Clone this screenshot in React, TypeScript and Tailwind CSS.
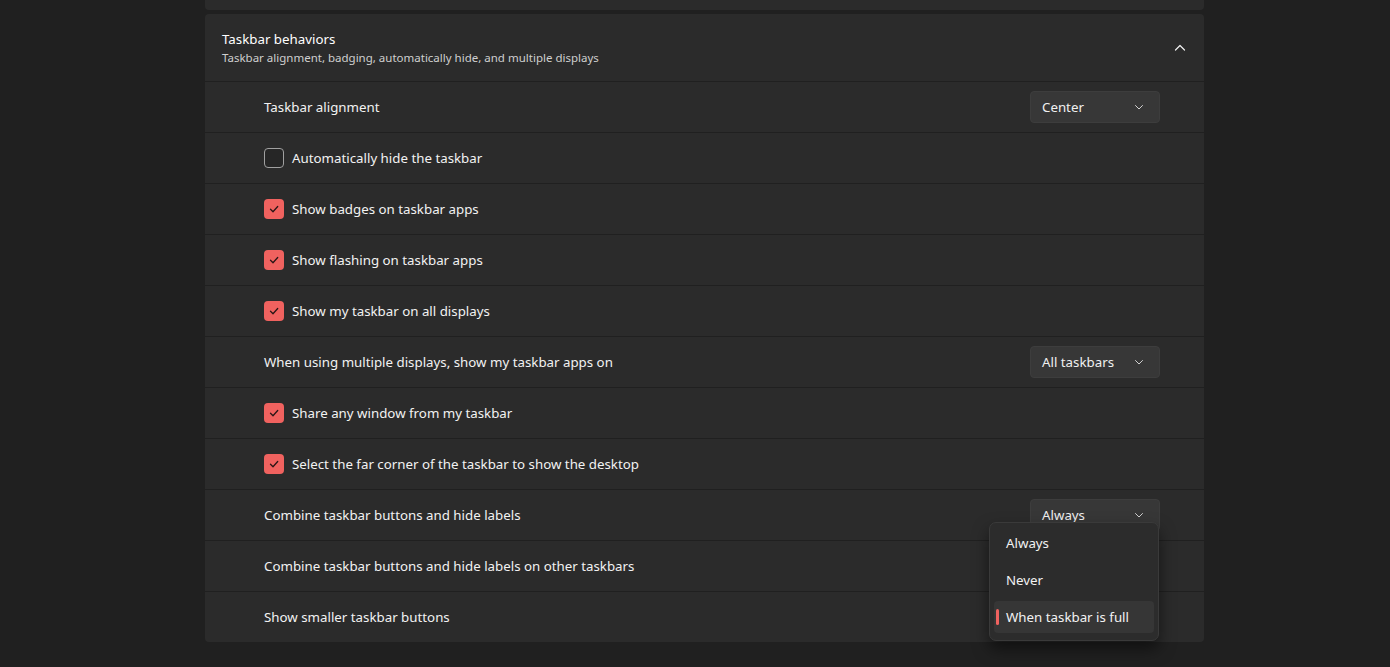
import React from "react";

type Row =
  | { kind: "dropdown"; label: string; value: string }
  | { kind: "check"; label: string; checked: boolean }
  | { kind: "plain"; label: string };

const rows: Row[] = [
  { kind: "dropdown", label: "Taskbar alignment", value: "Center" },
  { kind: "check", label: "Automatically hide the taskbar", checked: false },
  { kind: "check", label: "Show badges on taskbar apps", checked: true },
  { kind: "check", label: "Show flashing on taskbar apps", checked: true },
  { kind: "check", label: "Show my taskbar on all displays", checked: true },
  { kind: "dropdown", label: "When using multiple displays, show my taskbar apps on", value: "All taskbars" },
  { kind: "check", label: "Share any window from my taskbar", checked: true },
  { kind: "check", label: "Select the far corner of the taskbar to show the desktop", checked: true },
  { kind: "dropdown", label: "Combine taskbar buttons and hide labels", value: "Always" },
  { kind: "plain", label: "Combine taskbar buttons and hide labels on other taskbars" },
  { kind: "plain", label: "Show smaller taskbar buttons" },
];

const ChevronDown = () => (
  <svg width="10" height="10" viewBox="0 0 10 10" fill="none">
    <path d="M1.5 3.5 L5 7 L8.5 3.5" stroke="#d0d0d0" strokeWidth="1" strokeLinecap="round" strokeLinejoin="round" />
  </svg>
);

const Dropdown = ({ value }: { value: string }) => (
  <div className="flex items-center justify-between w-[130px] h-[32px] rounded-[4px] bg-[#373737] border border-[#3d3d3d] pl-[11px] pr-[15px] text-[13.3px] text-[#f0f0f0]">
    <span className="pt-[1px]">{value}</span>
    <ChevronDown />
  </div>
);

const Checkbox = ({ checked }: { checked: boolean }) =>
  checked ? (
    <div className="w-[20px] h-[20px] rounded-[4px] bg-[#f0625f] flex items-center justify-center">
      <svg width="12" height="12" viewBox="0 0 12 12" fill="none">
        <path d="M2.5 6.3 L5 8.7 L9.7 3.5" stroke="#2a1616" strokeWidth="1.3" strokeLinecap="round" strokeLinejoin="round" />
      </svg>
    </div>
  ) : (
    <div className="w-[20px] h-[20px] rounded-[4px] border border-[#a0a0a0] bg-[#262626]" />
  );

const App = () => {
  return (
    <div
      className="w-[1390px] h-[667px] bg-[#202020] overflow-hidden text-[#ffffff]"
      style={{ fontFamily: '"Noto Sans", "Open Sans", sans-serif' }}
    >
      <div className="ml-[205px] w-[999px] flex flex-col gap-[1px]">
        <div className="h-[10px] bg-[#2b2b2b] rounded-b-[4px] mb-[3px]" />
        <div className="h-[67px] bg-[#2b2b2b] rounded-t-[4px] flex items-center justify-between pl-[17px] pr-[18px]">
          <div className="flex flex-col pt-[1px]">
            <div className="text-[13.3px] leading-[19px] text-[#ffffff]">Taskbar behaviors</div>
            <div className="text-[11.5px] leading-[17px] text-[#cfcfcf]">
              Taskbar alignment, badging, automatically hide, and multiple displays
            </div>
          </div>
          <svg width="12" height="12" viewBox="0 0 12 12" fill="none">
            <path d="M1.5 8 L6 3.5 L10.5 8" stroke="#f0f0f0" strokeWidth="1.2" strokeLinecap="round" strokeLinejoin="round" />
          </svg>
        </div>
        <div className="relative flex flex-col gap-[1px]">
          {rows.map((r, i) => (
            <div
              key={i}
              className={`h-[50px] bg-[#2b2b2b] flex items-center justify-between pl-[59px] pr-[44px] ${
                i === rows.length - 1 ? "rounded-b-[4px]" : ""
              }`}
            >
              <div className="flex items-center gap-[8px] text-[13.3px] text-[#f2f2f2]">
                {r.kind === "check" && <Checkbox checked={r.checked} />}
                <span className="pt-[2px]">{r.label}</span>
              </div>
              {r.kind === "dropdown" && <Dropdown value={r.value} />}
            </div>
          ))}

          <div className="absolute left-[784px] top-[440px] w-[170px] h-[119px] rounded-[7px] bg-[#2c2c2c] border border-[#3a3a3a] shadow-[0_8px_16px_rgba(0,0,0,0.5)] flex flex-col px-[4px] py-[4px] gap-[5px] text-[13.3px] text-[#f2f2f2]">
            <div className="h-[32px] flex items-center pl-[12px] pt-[2px]">Always</div>
            <div className="h-[32px] flex items-center pl-[12px] pt-[2px]">Never</div>
            <div className="relative h-[32px] flex items-center pl-[12px] pt-[2px] rounded-[4px] bg-[#363636]">
              <div className="absolute left-[2px] top-[8px] w-[3px] h-[16px] rounded-full bg-[#f0625f]" />
              When taskbar is full
            </div>
          </div>
        </div>
      </div>
    </div>
  );
};

export default App;
